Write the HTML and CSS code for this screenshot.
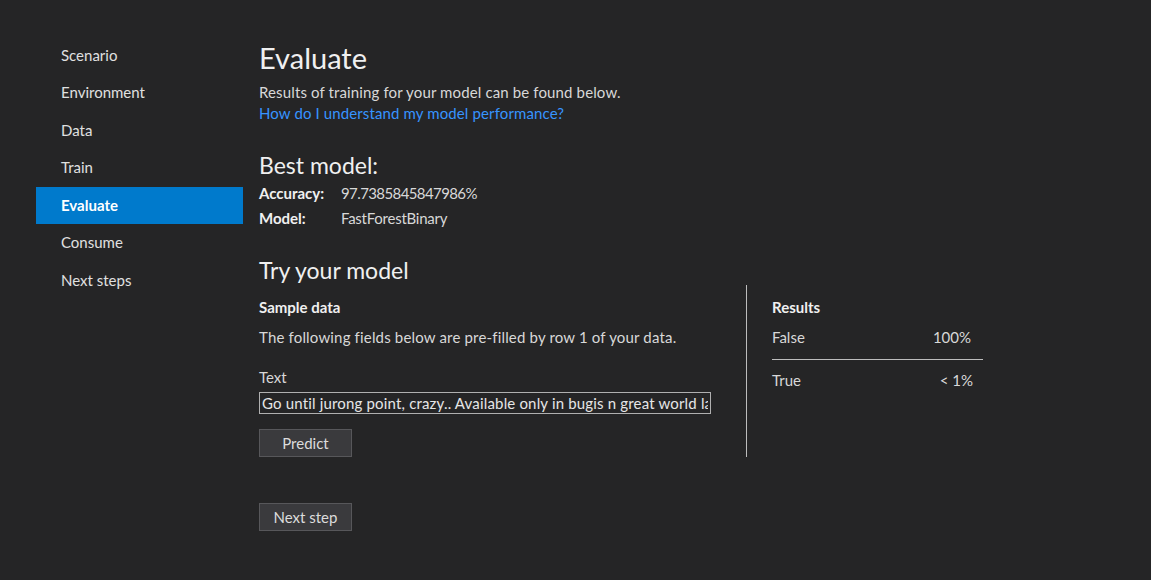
FILE: index.html
```html
<!DOCTYPE html>
<html lang="en">
<head>
<meta charset="utf-8">
<title>Evaluate</title>
<link rel="stylesheet" href="styles.css">
</head>
<body>
<div class="page">
  <nav class="nav">
    <div class="nav-item">Scenario</div>
    <div class="nav-item">Environment</div>
    <div class="nav-item">Data</div>
    <div class="nav-item">Train</div>
    <div class="nav-item active">Evaluate</div>
    <div class="nav-item">Consume</div>
    <div class="nav-item">Next steps</div>
  </nav>
  <main class="main">
    <h1 class="title">Evaluate</h1>
    <p class="intro">Results of training for your model can be found below.</p>
    <a class="link" href="#">How do I understand my model performance?</a>

    <h2 class="section-title best">Best model:</h2>
    <div class="kv"><span class="k">Accuracy:</span><span class="v num">97.7385845847986%</span></div>
    <div class="kv"><span class="k">Model:</span><span class="v name">FastForestBinary</span></div>

    <h2 class="section-title try">Try your model</h2>
    <div class="try-grid">
      <div class="sample">
        <div class="label-bold">Sample data</div>
        <div class="desc">The following fields below are pre-filled by row 1 of your data.</div>
        <div class="field-label">Text</div>
        <input class="text-input" type="text" value="Go until jurong point, crazy.. Available only in bugis n great world la e buffet... Cine there got amore wat...">
        <button class="btn predict">Predict</button>
      </div>
      <div class="results">
        <div class="label-bold">Results</div>
        <div class="res-row first"><span>False</span><span class="pct">100%</span></div>
        <div class="res-row second"><span>True</span><span class="pct low">&lt; 1%</span></div>
      </div>
    </div>
    <button class="btn next">Next step</button>
  </main>
</div>
</body>
</html>
```
FILE: styles.css
```css
html, body {
  margin: 0;
  padding: 0;
  background: #252526;
  height: 100%;
}
body {
  font-family: "Lato", "Open Sans", sans-serif;
  color: #d8d8d8;
  font-size: 15px;
}
.page {
  display: flex;
  gap: 16px;
  padding-left: 36px;
}
.nav {
  width: 207px;
  padding-top: 36.5px;
  flex: none;
}
.nav-item {
  height: 37.5px;
  line-height: 37.5px;
  padding-left: 25px;
  font-size: 15px;
  color: #e0e0e0;
}
.nav-item.active {
  background: #007acc;
  color: #ffffff;
  font-weight: bold;
}
.main {
  flex: 1;
  padding-top: 35px;
}
.title {
  margin: 0;
  font-size: 29px;
  font-weight: normal;
  line-height: 45px;
  margin-bottom: 2px;
  color: #f0f0f0;
}
.intro {
  margin: 0;
  line-height: 21px;
  letter-spacing: 0.13px;
}
.link {
  display: block;
  line-height: 21px;
  color: #3794ff;
  text-decoration: none;
  letter-spacing: 0.12px;
}
.section-title {
  margin: 0;
  font-size: 23px;
  font-weight: normal;
  color: #f0f0f0;
}
.section-title.best {
  margin-top: 26px;
  line-height: 31px;
}
.kv {
  display: flex;
  line-height: 25px;
  height: 25px;
}
.k {
  width: 82px;
  font-weight: bold;
  color: #f0f0f0;
}
.v.num {
  letter-spacing: -0.6px;
}
.v.name {
  letter-spacing: -0.25px;
}
.section-title.try {
  margin-top: 24px;
  line-height: 30px;
}
.try-grid {
  display: flex;
}
.sample {
  width: 487px;
  border-right: 1px solid #bdbdbd;
  padding-top: 11px;
}
.label-bold {
  font-weight: bold;
  color: #f0f0f0;
  line-height: 22px;
}
.desc {
  margin-top: 8px;
  line-height: 22px;
  letter-spacing: 0.17px;
}
.field-label {
  margin-top: 18px;
  line-height: 22px;
}
.text-input {
  display: block;
  box-sizing: border-box;
  width: 452px;
  height: 22px;
  margin: 4px 0 0;
  padding: 0 2px;
  background: transparent;
  border: 1px solid #b0b0b0;
  color: #e6e6e6;
  font-family: inherit;
  font-size: 15px;
  letter-spacing: 0.17px;
  outline: none;
}
.btn {
  display: block;
  box-sizing: border-box;
  width: 93px;
  height: 28px;
  background: #3a3a3d;
  border: 1px solid #57575a;
  color: #dcdcdc;
  font-family: inherit;
  font-size: 15px;
  padding: 0;
}
.btn.predict {
  margin-top: 15px;
}
.results {
  width: 211px;
  margin-left: 25px;
  padding-top: 11px;
}
.res-row {
  display: flex;
  justify-content: space-between;
  padding-right: 12px;
  line-height: 22px;
}
.res-row.first {
  margin-top: 8px;
  padding-bottom: 11px;
  border-bottom: 1px solid #bdbdbd;
}
.res-row.second {
  margin-top: 9px;
}
.pct.low {
  margin-right: -2px;
}
.btn.next {
  margin-top: 46px;
}
```
